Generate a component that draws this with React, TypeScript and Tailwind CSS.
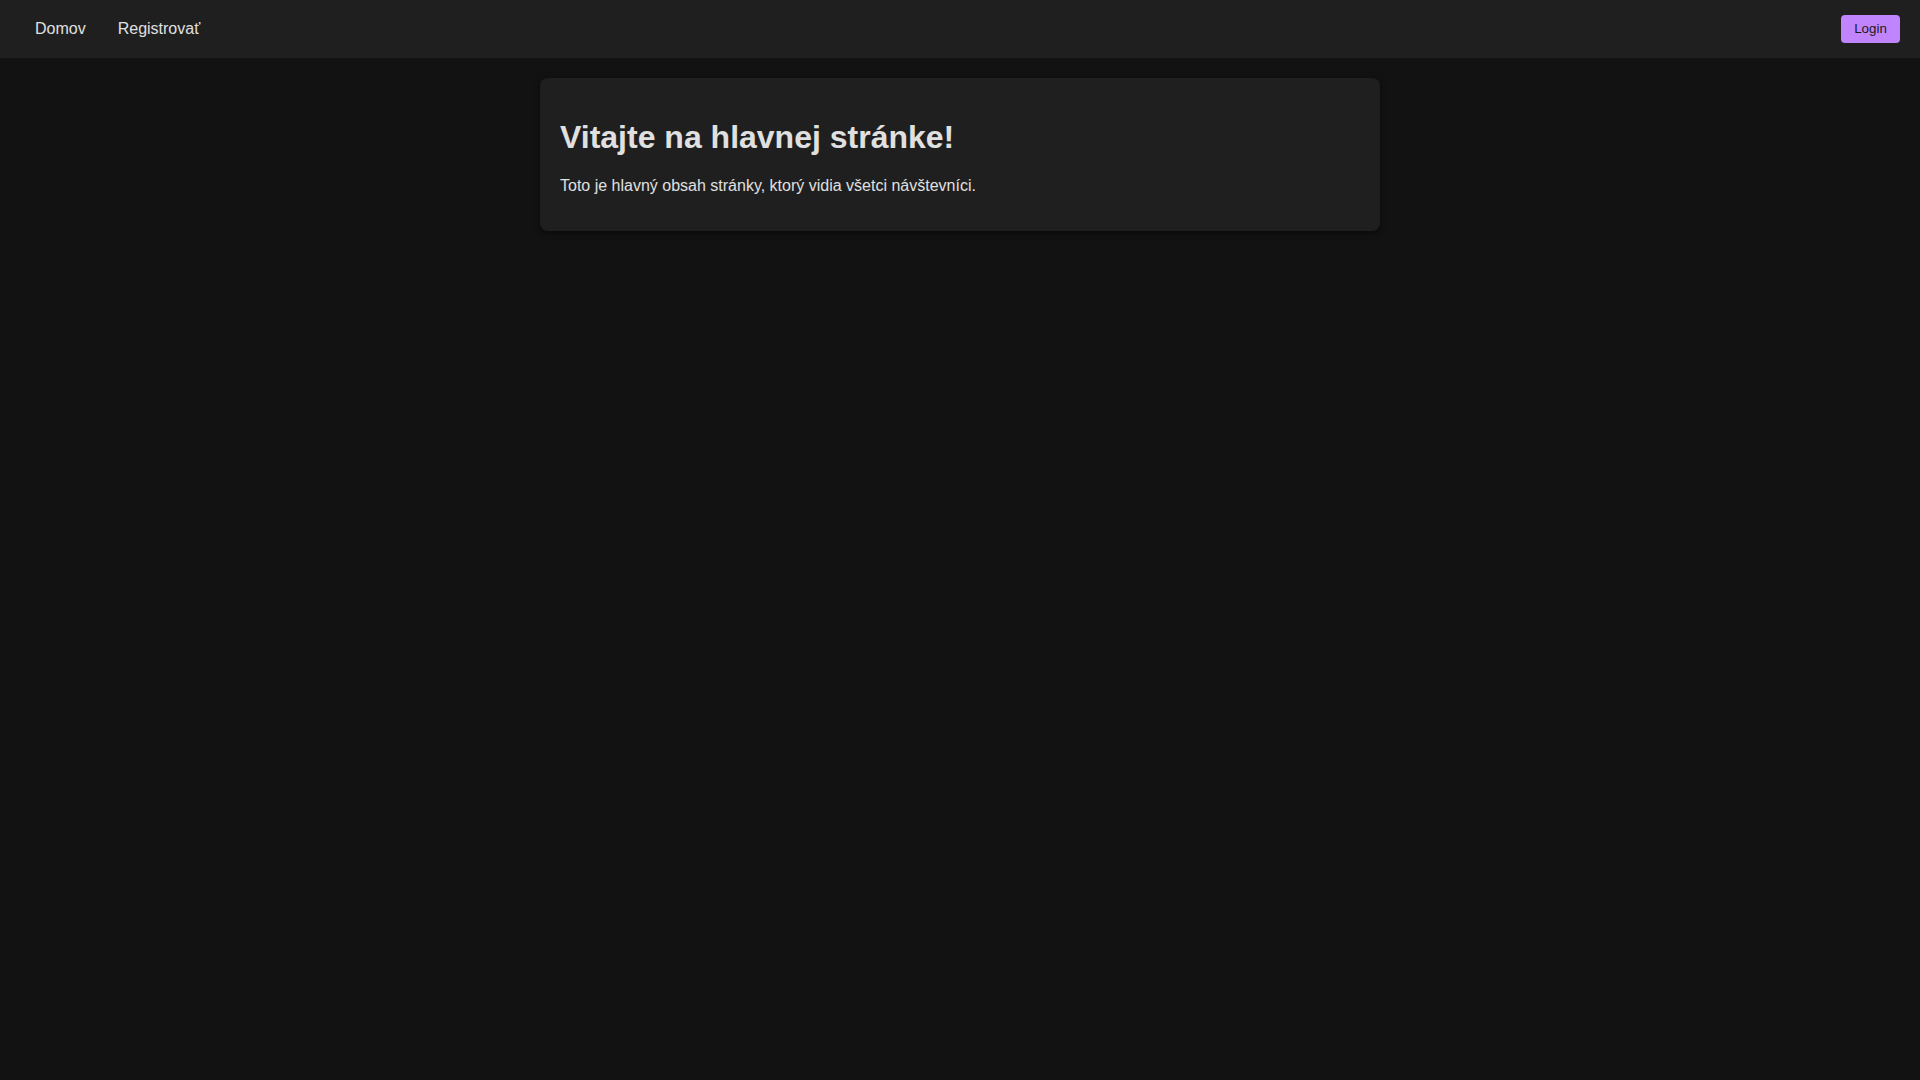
import React from 'react';

const App = () => {
  const links = ['Domov', 'Registrovať'];

  return (
    <div className="min-h-screen bg-[#121212] text-[#e0e0e0] font-['Liberation_Sans',Arial,sans-serif]">
      {/* Navbar */}
      <nav className="h-[58px] bg-[#1f1f1f] flex items-center justify-between pl-[35px] pr-5">
        <div className="flex items-center gap-[32px] text-base">
          {links.map(link => (
            <a key={link} href="#" className="text-[#e0e0e0]">
              {link}
            </a>
          ))}
        </div>
        <button className="w-[59px] h-[28px] rounded bg-[#c084fc] text-[#1a1a1a] text-[13.33px] flex items-center justify-center">
          Login
        </button>
      </nav>

      {/* Main content */}
      <main className="pt-5">
        <div className="w-[840px] mx-auto bg-[#1f1f1f] rounded-lg p-5 shadow-[0_2px_6px_rgba(0,0,0,0.5)]">
          <h1 className="text-[32px] font-bold leading-[37px] my-[21px]">
            Vitajte na hlavnej stránke!
          </h1>
          <p className="text-base leading-[18px] mb-4">
            Toto je hlavný obsah stránky, ktorý vidia všetci návštevníci.
          </p>
        </div>
      </main>
    </div>
  );
};

export default App;
